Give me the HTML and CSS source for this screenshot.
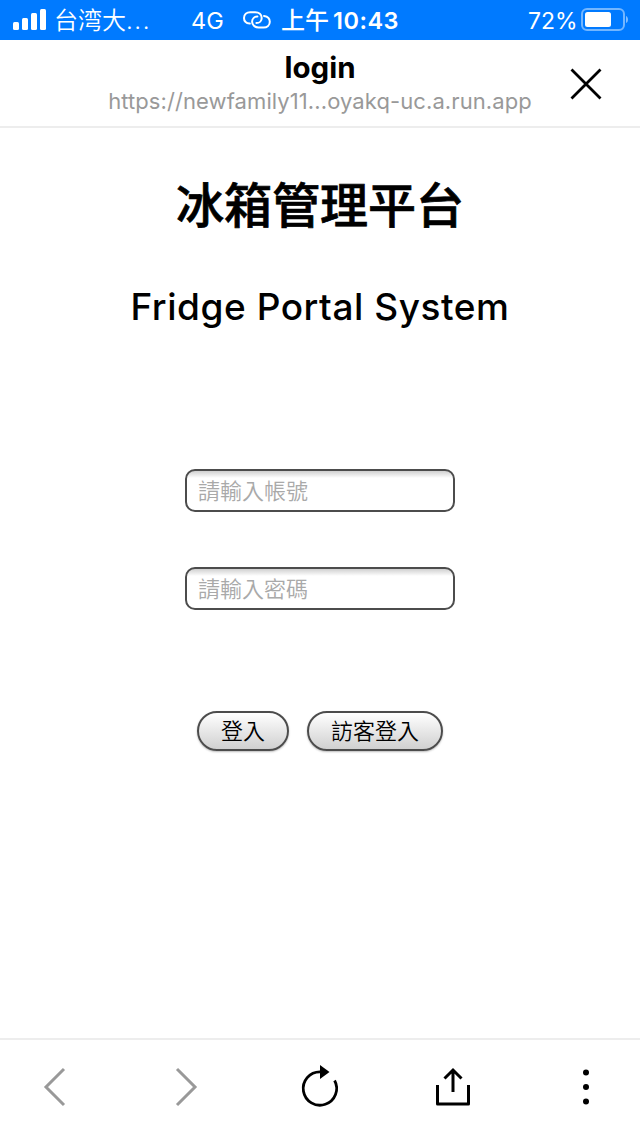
FILE: index.html
```html
<!DOCTYPE html>
<html lang="zh-Hant">
<head>
<meta charset="utf-8">
<title>login</title>
<link rel="stylesheet" href="styles.css">
</head>
<body>
<div class="status">
  <svg class="signal" width="34" height="22" viewBox="0 0 34 22" fill="#fff"><rect x="0" y="13" width="6" height="8" rx="1.5"/><rect x="9" y="9" width="6" height="12" rx="1.5"/><rect x="18" y="4" width="6" height="17" rx="1.5"/><rect x="27" y="0" width="6" height="21" rx="1.5"/></svg>
  <span class="carrier">台湾大<span class="dots">...</span></span>
  <span class="network">4G</span>
  <svg class="link" width="28" height="18" viewBox="0 0 28 18" fill="none" stroke="#fff" stroke-width="2" stroke-linecap="round"><path d="M6.8 12.6C3.3 12.1 1 9.8 1 6.9C1 3.6 3.7 1.2 7.2 1.2H12.2C16 1.2 18.7 3.7 18.7 6.9C18.7 9.8 16.6 12.1 13.4 12.1"/><path d="M21 5C24.5 5.5 26.8 7.8 26.8 10.8C26.8 14.1 24.1 16.5 20.6 16.5H15.6C11.8 16.5 9.1 14 9.1 10.8C9.1 7.9 11.2 5.6 14.4 5.6"/></svg>
  <span class="clock"><span class="ampm">上午</span><span class="time">10:43</span></span>
  <span class="percent">72%</span>
  <svg class="battery" width="48" height="24" viewBox="0 0 48 24"><rect x="1" y="1" width="42" height="21" rx="5" fill="none" stroke="#fff" stroke-opacity=".45" stroke-width="2"/><rect x="4" y="4" width="26" height="15" rx="2.5" fill="#fff"/><path d="M45 8C47.7 9 47.7 14 45 15Z" fill="#fff" fill-opacity=".5"/></svg>
</div>
<header class="header">
  <div class="page-title">login</div>
  <div class="page-url">https://newfamily11...oyakq-uc.a.run.app</div>
  <svg class="close" width="32" height="32" viewBox="0 0 32 32" fill="none" stroke="#000" stroke-width="2.8"><path d="M1.5 1.5L30.5 30.5M30.5 1.5L1.5 30.5"/></svg>
</header>
<main class="content">
  <h1 class="title">冰箱管理平台</h1>
  <h2 class="subtitle">Fridge Portal System</h2>
  <form class="form">
    <input class="field" type="text" placeholder="請輸入帳號">
    <input class="field" type="password" placeholder="請輸入密碼">
    <div class="actions">
      <button class="button login" type="button">登入</button>
      <button class="button guest" type="button">訪客登入</button>
    </div>
  </form>
</main>
<nav class="toolbar">
  <svg viewBox="0 0 60 60" fill="none" stroke="#999" stroke-width="3"><path d="M40 12L22 30L40 48"/></svg>
  <svg viewBox="0 0 60 60" fill="none" stroke="#999" stroke-width="3"><path d="M20 12L38 30L20 48"/></svg>
  <svg viewBox="0 0 60 60" fill="none" stroke="#000" stroke-width="2.8"><path d="M44.6 23.5A16.7 16.7 0 1 1 30 14.8"/><path d="M30 8L39.5 15L30 22Z" fill="#000" stroke="none"/></svg>
  <svg viewBox="0 0 60 60" fill="none" stroke="#000" stroke-width="3"><path d="M14.5 28V47H45.5V28" stroke-linejoin="round"/><path d="M30 35V13M21.5 21.5L30 13L38.5 21.5"/></svg>
  <svg viewBox="0 0 60 60"><circle cx="30" cy="15.5" r="3"/><circle cx="30" cy="30" r="3"/><circle cx="30" cy="44.5" r="3"/></svg>
</nav>
</body>
</html>
```
FILE: styles.css
```css
* { box-sizing: border-box; }
body {
  margin: 0;
  width: 640px;
  height: 1136px;
  display: flex;
  flex-direction: column;
  overflow: hidden;
  background: #fff;
  color: #000;
  font-family: Inter, "Noto Sans CJK TC", sans-serif;
}
svg { display: block; flex: none; }
.status {
  height: 40px;
  flex: none;
  display: flex;
  align-items: center;
  padding-left: 13px;
  background: #007aff;
  color: #fff;
  font-size: 24px;
  line-height: 38px;
  white-space: nowrap;
}
.status span { flex: none; }
.carrier, .network, .clock, .percent { padding-top: 2px; }
.carrier { width: 137px; margin-left: 7px; font-weight: 350; font-family: Inter, "Noto Sans CJK SC", sans-serif; }
.dots { letter-spacing: 1.6px; }
.network { width: 52px; font-size: 23.5px; }
.link { margin-right: 10px; }
.clock { width: 247px; font-weight: 600; }
.ampm { font-weight: 500; margin-right: 4px; }
.time { font-size: 23.5px; letter-spacing: 0.5px; }
.percent { width: 53px; font-size: 23px; }
.header {
  position: relative;
  height: 88px;
  flex: none;
  border-bottom: 2px solid #ededed;
  text-align: center;
}
.page-title { padding-top: 9px; font-size: 29.5px; line-height: 36px; font-weight: 700; }
.page-url { margin-top: 2px; font-size: 22px; line-height: 28px; color: #999; letter-spacing: 0.09px; }
.close { position: absolute; right: 38px; top: 28px; }
.content { flex: 1; text-align: center; }
.title { margin: 42px 0 0; font-size: 48px; line-height: 72px; font-weight: 500; -webkit-text-stroke: 0.7px #000; }
.subtitle { margin: 40px 0 0; font-size: 37px; line-height: 50px; font-weight: 500; letter-spacing: 0.55px; }
.form { display: flex; flex-direction: column; align-items: center; margin-top: 137px; }
.field {
  width: 270px;
  height: 43px;
  padding: 0 11px 3px;
  border: 2px solid #4c4c4c;
  border-radius: 10px;
  background: linear-gradient(#d0d0d0, #fff 7px);
  font-family: "Noto Sans CJK TC", sans-serif;
  font-size: 22px;
}
.field + .field { margin-top: 55px; }
.field::placeholder { color: #a9a9a9; font-weight: 350; }
.actions { display: flex; gap: 18px; margin-top: 101px; }
.button {
  height: 40px;
  padding: 0 0 3px;
  border: 2px solid #4c4c4c;
  border-radius: 20px;
  background: linear-gradient(#fff, #d0d0d0);
  box-shadow: 0 1px 2px #bbb;
  color: #000;
  font-family: "Noto Sans CJK TC", sans-serif;
  font-size: 22px;
  font-weight: 350;
  line-height: 33px;
}
.login { width: 92px; }
.guest { width: 136px; }
.toolbar {
  height: 98px;
  flex: none;
  display: flex;
  justify-content: space-between;
  padding: 17px 24px 0;
  border-top: 2px solid #ededed;
}
.toolbar svg { width: 60px; height: 60px; }
```
